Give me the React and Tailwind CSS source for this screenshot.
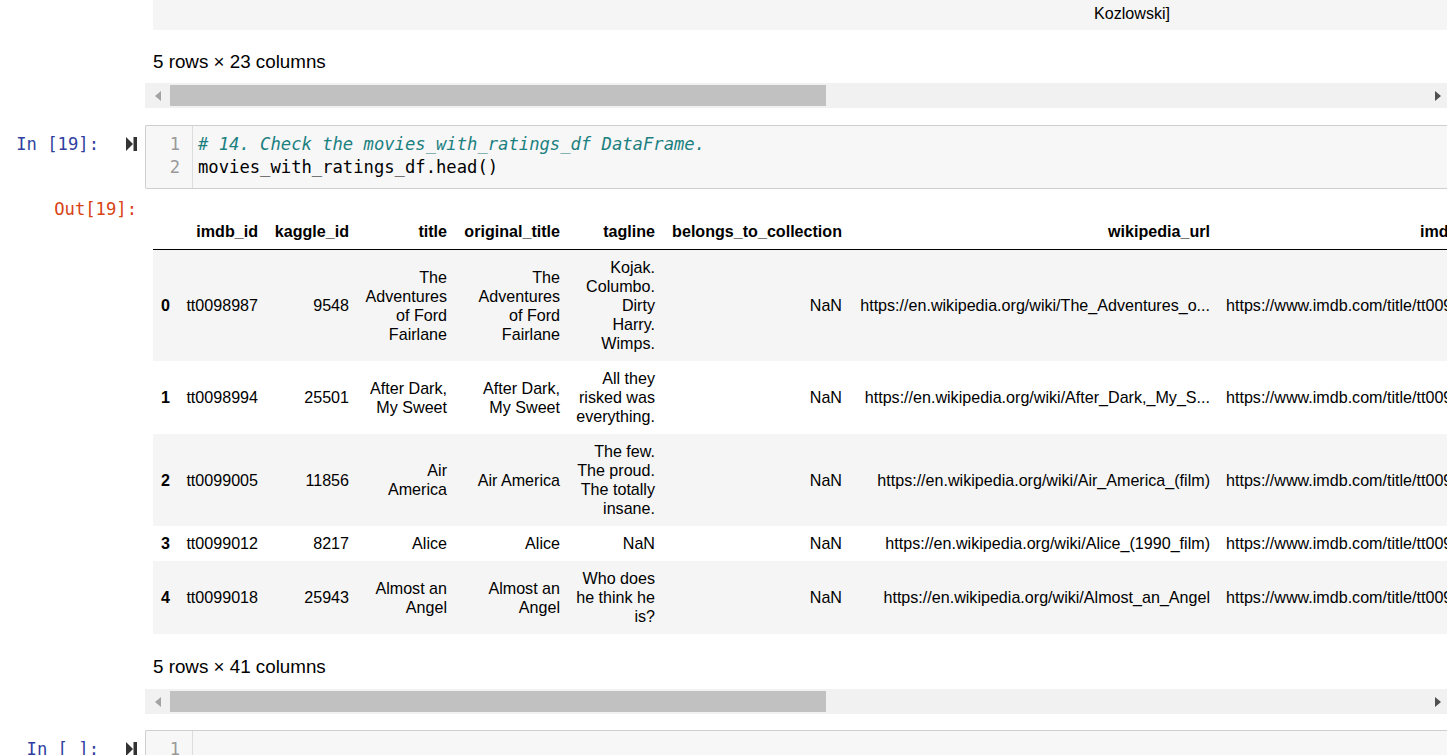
import React from "react";

const rows = [
  {
    idx: "0",
    imdb: "tt0098987",
    kaggle: "9548",
    title: "The Adventures of Ford Fairlane",
    orig: "The Adventures of Ford Fairlane",
    tagline: "Kojak. Columbo. Dirty Harry. Wimps.",
    coll: "NaN",
    wiki: "https://en.wikipedia.org/wiki/The_Adventures_o...",
    imdbUrl: "https://www.imdb.com/title/tt0098987/",
  },
  {
    idx: "1",
    imdb: "tt0098994",
    kaggle: "25501",
    title: "After Dark, My Sweet",
    orig: "After Dark, My Sweet",
    tagline: "All they risked was everything.",
    coll: "NaN",
    wiki: "https://en.wikipedia.org/wiki/After_Dark,_My_S...",
    imdbUrl: "https://www.imdb.com/title/tt0098994/",
  },
  {
    idx: "2",
    imdb: "tt0099005",
    kaggle: "11856",
    title: "Air America",
    orig: "Air America",
    tagline: "The few. The proud. The totally insane.",
    coll: "NaN",
    wiki: "https://en.wikipedia.org/wiki/Air_America_(film)",
    imdbUrl: "https://www.imdb.com/title/tt0099005/",
  },
  {
    idx: "3",
    imdb: "tt0099012",
    kaggle: "8217",
    title: "Alice",
    orig: "Alice",
    tagline: "NaN",
    coll: "NaN",
    wiki: "https://en.wikipedia.org/wiki/Alice_(1990_film)",
    imdbUrl: "https://www.imdb.com/title/tt0099012/",
  },
  {
    idx: "4",
    imdb: "tt0099018",
    kaggle: "25943",
    title: "Almost an Angel",
    orig: "Almost an Angel",
    tagline: "Who does he think he is?",
    coll: "NaN",
    wiki: "https://en.wikipedia.org/wiki/Almost_an_Angel",
    imdbUrl: "https://www.imdb.com/title/tt0099018/",
  },
];

const headers = [
  "",
  "imdb_id",
  "kaggle_id",
  "title",
  "original_title",
  "tagline",
  "belongs_to_collection",
  "wikipedia_url",
  "imdb_url",
];

// run-cell button drawn next to the prompt
const RunIcon = ({ className }) => (
  <svg className={className} width="11" height="14" viewBox="0 0 11 14">
    <polygon points="0,0 7,7 0,14" fill="#333" />
    <rect x="7.5" y="0" width="3.5" height="14" fill="#333" />
  </svg>
);

const Scrollbar = ({ className }) => (
  <div className={`h-[25px] bg-[#f1f1f1] flex items-center ${className}`}>
    <div className="w-[25px] flex justify-center">
      <svg width="6" height="10" viewBox="0 0 6 10">
        <polygon points="6,0 0,5 6,10" fill="#a3a3a3" />
      </svg>
    </div>
    <div className="w-[656px] h-[21px] bg-[#c1c1c1]" />
    <div className="flex-1" />
    <div className="w-[23px] flex justify-center">
      <svg width="6" height="10" viewBox="0 0 6 10">
        <polygon points="0,0 6,5 0,10" fill="#505050" />
      </svg>
    </div>
  </div>
);

const CodeCell = ({ prompt, lines, className = "", height = "h-[64px]" }) => (
  <div className={`flex ${className}`}>
    <div className="w-[145px] shrink-0 flex">
      <div className="w-[99px] text-right pt-[8px] leading-[23px] font-['DejaVu_Sans_Mono',monospace] text-[17.2px] text-[#303F9F] whitespace-pre">
        {prompt}
      </div>
      <RunIcon className="ml-[27px] mt-[12px]" />
    </div>
    <div className={`flex-1 ${height} flex border border-r-0 border-[#cfcfcf] rounded-l-[2px] bg-[#f7f7f7] font-['DejaVu_Sans_Mono',monospace] text-[17.2px] leading-[23px]`}>
      <div className="w-[47px] shrink-0 border-r border-[#dddddd] pt-[7px] pr-[12px] text-right text-[#999999]">
        {lines.map((_, i) => (
          <div key={i}>{i + 1}</div>
        ))}
      </div>
      <div className="pl-[5px] pt-[7px] whitespace-pre">
        {lines.map((l, i) => (
          <div key={i}>{l}</div>
        ))}
      </div>
    </div>
  </div>
);

const DataTable = () => (
  <table className="table-fixed border-collapse w-[1343px] text-[16.1px] leading-[19px] text-black">
    <colgroup>
      <col className="w-[25px]" />
      <col className="w-[88px]" />
      <col className="w-[91px]" />
      <col className="w-[98px]" />
      <col className="w-[113px]" />
      <col className="w-[95px]" />
      <col className="w-[187px]" />
      <col className="w-[368px]" />
      <col className="w-[278px]" />
    </colgroup>
    <thead>
      <tr className="border-b border-black">
        {headers.map((h, i) => (
          <th key={i} className="p-2 text-right font-bold whitespace-nowrap align-bottom">
            {h}
          </th>
        ))}
      </tr>
    </thead>
    <tbody>
      {rows.map((r, i) => (
        <tr key={r.idx} className={i % 2 === 0 ? "bg-[#f5f5f5]" : "bg-white"}>
          <th className="p-2 text-left font-bold align-middle">{r.idx}</th>
          <td className="p-2 text-right align-middle">{r.imdb}</td>
          <td className="p-2 text-right align-middle">{r.kaggle}</td>
          <td className="p-2 text-right align-middle">{r.title}</td>
          <td className="p-2 text-right align-middle">{r.orig}</td>
          <td className="p-2 text-right align-middle">{r.tagline}</td>
          <td className="p-2 text-right align-middle">{r.coll}</td>
          <td className="p-2 text-right align-middle whitespace-nowrap">{r.wiki}</td>
          <td className="p-2 text-left align-middle whitespace-nowrap">{r.imdbUrl}</td>
        </tr>
      ))}
    </tbody>
  </table>
);

export default function App() {
  return (
    <div className="w-[1447px] h-[755px] overflow-hidden bg-white text-black font-['Liberation_Sans',Arial,sans-serif]">
      <div className="w-[1449px]">
        {/* tail of the previous output */}
        <div className="flex">
          <div className="w-[145px] shrink-0" />
          <div className="flex-1 min-w-0">
            <div className="ml-2 h-[30px] bg-[#f5f5f5] pt-[4px] pl-[941px] text-[16.1px] leading-[19px] whitespace-nowrap">
              Kozlowski]
            </div>
            <div className="ml-2 mt-[19px] text-[18.8px] leading-[25px]">5 rows × 23 columns</div>
            <Scrollbar className="mt-[9px]" />
          </div>
        </div>

        <CodeCell
          className="mt-[17px]"
          prompt="In [19]:"
          lines={[
            <span key="c" className="italic text-[#1b8080]">
              # 14. Check the movies_with_ratings_df DataFrame.
            </span>,
            "movies_with_ratings_df.head()",
          ]}
        />

        {/* output */}
        <div className="flex">
          <div className="w-[145px] shrink-0 pr-[8px] pt-[9px] text-right font-['DejaVu_Sans_Mono',monospace] text-[17.2px] leading-[23px] text-[#D84315]">
            Out[19]:
          </div>
          <div className="flex-1 min-w-0">
            <div className="ml-2 mt-[25px] overflow-hidden">
              <DataTable />
            </div>
            <div className="ml-2 mt-[20px] text-[18.8px] leading-[25px]">5 rows × 41 columns</div>
            <Scrollbar className="mt-[10px]" />
          </div>
        </div>

        <CodeCell className="mt-[16px]" prompt="In [ ]:" lines={[""]} height="h-[46px]" />
      </div>
    </div>
  );
}
